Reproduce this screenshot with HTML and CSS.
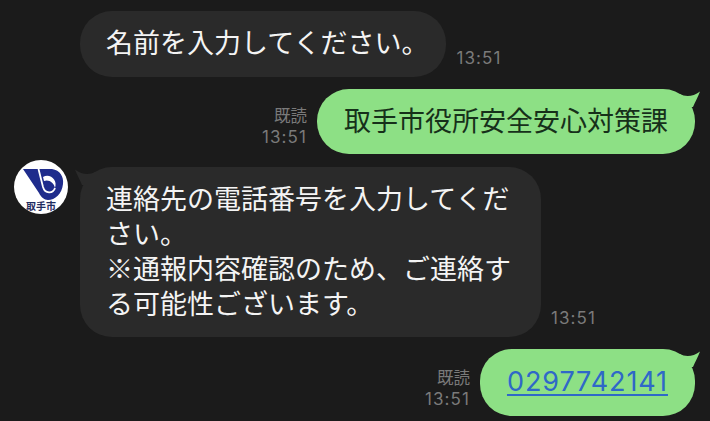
FILE: index.html
```html
<!DOCTYPE html>
<html lang="ja">

<head>
  <meta charset="UTF-8">
  <title>トーク</title>
  <link rel="stylesheet" href="styles.css">
</head>

<body>
  <div class="chat">
    <div class="row in no-avatar">
      <div class="bubble short">名前を入力してください。</div>
      <div class="meta"><span>13:51</span></div>
    </div>

    <div class="row out">
      <div class="meta"><span class="read">既読</span><span>13:51</span></div>
      <div class="bubble">
        取手市役所安全安心対策課
        <svg class="tail" viewBox="0 0 28 18"><path d="M7 5C12 8 20 8 27 2.5C25 8 22 13 20 18L7 18Z" /></svg>
      </div>
    </div>

    <div class="row in">
      <div class="avatar">
        <svg viewBox="0 0 54 54">
          <path class="navy" d="M9 9H38C46 10 50 17 49 24C48 34 41 40 34 40C30 40 27 37 25 33Z" />
          <path class="cut" d="M24.5 9L29 27C31 34 39 34 41 28" />
          <path class="wedge" d="M29 17C36 13 44 20 41 28C40 23 35 19 30 21Z" />
        </svg>
        <span class="avatar-name">取手市</span>
      </div>
      <div class="bubble wide">
        <svg class="tail" viewBox="0 0 28 18"><path d="M21 5C16 8 8 8 1 2.5C3 8 6 13 8 18L21 18Z" /></svg>
        連絡先の電話番号を入力してください。<br>※通報内容確認のため、ご連絡する可能性ございます。
      </div>
      <div class="meta"><span>13:51</span></div>
    </div>

    <div class="row out">
      <div class="meta"><span class="read">既読</span><span>13:51</span></div>
      <div class="bubble">
        <a href="#">0297742141</a>
        <svg class="tail" viewBox="0 0 28 18"><path d="M7 5C12 8 20 8 27 2.5C25 8 22 13 20 18L7 18Z" /></svg>
      </div>
    </div>

    <div class="next-avatar">
      <div class="next-circle"></div>
    </div>
  </div>
</body>

</html>
```

FILE: styles.css
```css
html,
body {
  margin: 0;
  height: 421px;
  overflow: hidden;
  background: #1b1b1b;
}

.chat {
  display: flex;
  flex-direction: column;
  gap: 12.5px;
  padding-top: 11px;
  font-family: "Noto Sans CJK JP", "Liberation Sans", sans-serif;
}

.row {
  display: flex;
  align-items: flex-end;
}

.row.in {
  padding-left: 14px;
}

.row.no-avatar {
  padding-left: 80px;
}

.row.out {
  justify-content: flex-end;
  padding-right: 15px;
}

.bubble {
  position: relative;
  padding: 13px 27px 17px;
  border-radius: 32px;
  font-size: 27px;
  line-height: 35px;
  white-space: nowrap;
}

.in .bubble {
  background: #2a2a2a;
  color: #f4f4f4;
  white-space: normal;
}

.in .bubble.short {
  padding: 13px 18px 17.5px 26px;
}

.in .bubble.wide {
  width: 407px;
  padding-left: 26px;
  padding-right: 28px;
}

.out .bubble {
  background: #8de085;
  color: #16301a;
}

.bubble a {
  color: #2f68c8;
  font-family: "Inter", "Liberation Sans", sans-serif;
  font-size: 27px;
  letter-spacing: 0.9px;
  text-underline-offset: 3px;
}

.tail {
  position: absolute;
  top: 0;
  width: 28px;
  height: 18px;
}

.out .tail {
  right: -6px;
  fill: #8de085;
}

.in .tail {
  left: -6px;
  fill: #2a2a2a;
}

.meta {
  display: flex;
  flex-direction: column;
  font-family: "Inter", "Liberation Sans", sans-serif;
  font-size: 17px;
  line-height: 21px;
  letter-spacing: 1.1px;
  color: #7a7a7a;
  margin-bottom: 6px;
}

.in .meta {
  margin-left: 10px;
  margin-bottom: 8px;
}

.out .meta {
  align-items: flex-end;
  margin-right: 10px;
}

.read {
  font-family: "Noto Sans CJK JP", sans-serif;
  font-size: 16.5px;
  line-height: 24px;
  letter-spacing: 0;
}

.avatar {
  align-self: flex-start;
  position: relative;
  width: 54px;
  height: 54px;
  margin-top: -7px;
  margin-right: 12px;
  border-radius: 50%;
  overflow: hidden;
  background: #fff;
}

.avatar svg {
  display: block;
}

.navy {
  fill: #1f2c8c;
}

.cut {
  fill: none;
  stroke: #fff;
  stroke-width: 1.8;
}

.wedge {
  fill: #fff;
}

.avatar-name {
  position: absolute;
  left: 0;
  right: 0;
  bottom: 3px;
  text-align: center;
  font-size: 10px;
  line-height: 11px;
  font-weight: 700;
  color: #1f2c60;
}

.next-avatar {
  height: 1.5px;
  margin-top: -7px;
  margin-left: 14px;
  overflow: hidden;
}

.next-circle {
  width: 54px;
  height: 54px;
  border-radius: 50%;
  background: #fff;
}
```
